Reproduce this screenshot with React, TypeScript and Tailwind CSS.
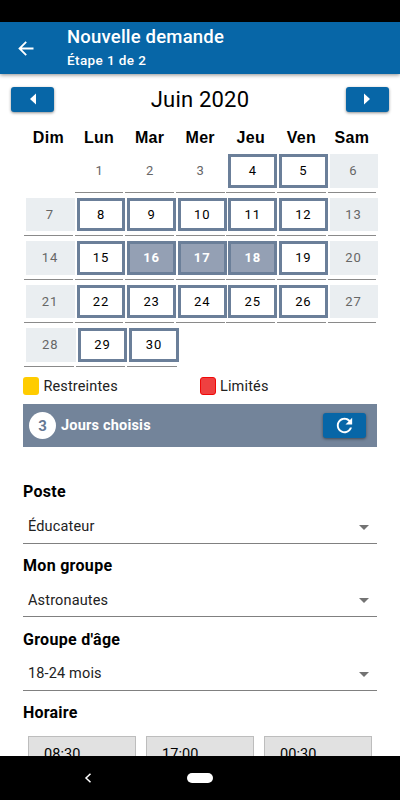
const DAYS = ['Dim', 'Lun', 'Mar', 'Mer', 'Jeu', 'Ven', 'Sam'];

const SELECTED = [16, 17, 18];

type Kind = 'empty' | 'past' | 'off' | 'open' | 'selected';

// June 2020 starts on a Monday
const weeks: number[][] = [
  [0, 1, 2, 3, 4, 5, 6],
  [7, 8, 9, 10, 11, 12, 13],
  [14, 15, 16, 17, 18, 19, 20],
  [21, 22, 23, 24, 25, 26, 27],
  [28, 29, 30],
];

function kindOf(day: number, col: number): Kind {
  if (day === 0) return 'empty';
  if (col === 0 || col === 6) return 'off';
  if (day < 4) return 'past';
  return SELECTED.includes(day) ? 'selected' : 'open';
}

const boxStyles: Record<Kind, string> = {
  empty: '',
  past: 'pr-[3px] text-[#666]',
  off: 'bg-[#eaeef1] pr-px text-[#666]',
  open: 'border-[3px] border-[#6b7f99] text-black font-[450]',
  selected: 'border-[3px] border-[#6b7f99] bg-[#94a0b4] text-white font-bold',
};

function Day({ day, col, last }: { day: number; col: number; last: boolean }) {
  const kind = kindOf(day, col);
  return (
    <div
      className={`h-[38.6px] shrink-0 border-b ${last ? 'w-[49.6px]' : 'w-[48.8px]'} ${
        kind === 'empty' ? 'border-transparent' : 'border-[#8a8a8a]'
      }`}
    >
      <div
        className={`ml-[2px] -mr-[2px] flex h-[33.6px] items-center justify-center text-[13px] tracking-[0.9px] ${boxStyles[kind]}`}
      >
        {day > 0 && day}
      </div>
    </div>
  );
}

function Select({ label, value }: { label: string; value: string }) {
  return (
    <div className="h-[73.6px]">
      <div className="h-5 pt-px text-[16px] leading-5 font-bold tracking-[0.3px]">{label}</div>
      <div className="flex h-[42.5px] items-center justify-between border-b border-[#808080] pt-[10px] pr-2 pl-[5px]">
        <span className="text-[14.5px] tracking-[0.15px] text-[#222]">{value}</span>
        <svg className="h-[5px] w-[10px]" viewBox="0 0 10 5">
          <path d="M0 0h10L5 5z" fill="#737373" />
        </svg>
      </div>
    </div>
  );
}

function NavButton({ dir }: { dir: 'left' | 'right' }) {
  return (
    <button className="flex h-[25px] w-[43px] items-center justify-center rounded-[3px] bg-[#0766a7] shadow-[0_1px_3px_rgba(0,0,0,0.45)]">
      <svg className="h-[12px] w-[6px]" viewBox="0 0 6 12">
        <path d={dir === 'left' ? 'M6 0.5v11L0 6z' : 'M0 0.5v11L6 6z'} fill="#fff" />
      </svg>
    </button>
  );
}

export default function App() {
  return (
    <div className="flex h-[800px] w-[400px] flex-col overflow-hidden bg-white font-['Roboto',sans-serif] text-black">
      <div className="h-[22px] shrink-0 bg-black" />
      <header className="z-10 flex h-[52px] shrink-0 bg-[#0766a7] text-white shadow-[0_1px_4px_rgba(0,0,0,0.45)]">
        <div className="w-[67px] pt-[19px] pl-[18px]">
          <svg className="h-[15px] w-4" viewBox="0 0 16 15" fill="none" stroke="#fff" strokeWidth="1.8">
            <path d="M15.5 7.5H1.7M8.2 0.8L1.5 7.5l6.7 6.7" />
          </svg>
        </div>
        <div>
          <div className="pt-[4px] text-[18.5px] leading-[22px] font-medium tracking-[0.2px]">Nouvelle demande</div>
          <div className="text-[13.5px] leading-[24px] font-medium tracking-[0.4px]">Étape 1 de 2</div>
        </div>
      </header>

      <main className="min-h-0 flex-1 overflow-hidden">
        <div className="flex h-[50px] items-center justify-between pr-[11px] pl-[11px]">
          <NavButton dir="left" />
          <h1 className="pt-px text-[22px] font-[450] tracking-[0.2px]">Juin 2020</h1>
          <NavButton dir="right" />
        </div>

        <div className="flex h-[30px] gap-[1.8px] pl-6">
          {DAYS.map((d) => (
            <div
              key={d}
              className="w-[48.8px] pt-[4px] text-center font-['Liberation_Sans',sans-serif] text-[16px] leading-5 font-bold tracking-[0.3px]"
            >
              {d}
            </div>
          ))}
        </div>

        <div className="pl-6">
          {weeks.map((week, i) => (
            <div key={i} className={`flex h-[43.5px] ${i === 4 ? 'gap-[2px]' : 'gap-[1.8px]'}`}>
              {week.map((day, col) => (
                <Day key={col} day={day} col={col} last={i === 4} />
              ))}
            </div>
          ))}
        </div>

        <div className="flex h-[32.9px] items-center pb-[3px] pl-[23.4px] text-[14.5px] tracking-[0.15px] text-[#222]">
          <div className="flex w-[176.6px] items-center gap-[4px]">
            <span className="h-[18px] w-4 rounded-[3px] bg-[#ffcc00]" />
            Restreintes
          </div>
          <div className="flex items-center gap-[4px]">
            <span className="h-[18px] w-4 rounded-[3px] border border-[#f00808] bg-[#ef4040]" />
            Limités
          </div>
        </div>

        <div className="mx-[23px] flex h-[43px] items-center bg-[#73849a] pr-[11px] pl-[6px]">
          <span className="flex h-[27px] w-[27px] items-center justify-center rounded-full bg-white text-[15px] font-bold text-[#657893]">
            3
          </span>
          <span className="ml-[5px] flex-1 text-[14.5px] font-bold tracking-[0.2px] text-white">Jours choisis</span>
          <button className="flex h-[25px] w-[43px] items-center justify-center rounded-[3px] bg-[#0766a7] shadow-[0_1px_3px_rgba(0,0,0,0.45)]">
            <svg className="h-[23px] w-[23px]" viewBox="0 0 24 24">
              <path
                d="M17.65 6.35C16.2 4.9 14.21 4 12 4c-4.42 0-7.99 3.58-7.99 8s3.57 8 7.99 8c3.73 0 6.84-2.55 7.73-6h-2.08c-.82 2.33-3.04 4-5.65 4-3.31 0-6-2.69-6-6s2.69-6 6-6c1.66 0 3.14.69 4.22 1.78L13 11h7V4l-2.35 2.35z"
                fill="#fff"
              />
            </svg>
          </button>
        </div>

        <section className="px-[23px] pt-[34px]">
          <Select label="Poste" value="Éducateur" />
          <Select label="Mon groupe" value="Astronautes" />
          <Select label="Groupe d'âge" value="18-24 mois" />
          <div className="h-5 pt-px text-[16px] leading-5 font-bold tracking-[0.2px]">Horaire</div>
          <div className="mt-[14px] flex gap-[10px] pl-[5px]">
            {['08:30', '17:00', '00:30'].map((t) => (
              <div
                key={t}
                className="h-[38px] w-[108px] border border-[#bdbdbd] bg-[#e1e1e1] pt-[7px] pl-[15px] text-[14.5px] tracking-[0.1px]"
              >
                {t}
              </div>
            ))}
          </div>
        </section>
      </main>

      <nav className="flex h-11 shrink-0 items-center bg-black pl-[84px]">
        <svg className="h-[10px] w-[8px]" viewBox="0 0 8 10" fill="none" stroke="#fff" strokeWidth="1.5">
          <path d="M6.5 0.7L2 5l4.5 4.3" />
        </svg>
        <div className="ml-[95px] h-[10px] w-[26px] rounded-full bg-white" />
      </nav>
    </div>
  );
}
